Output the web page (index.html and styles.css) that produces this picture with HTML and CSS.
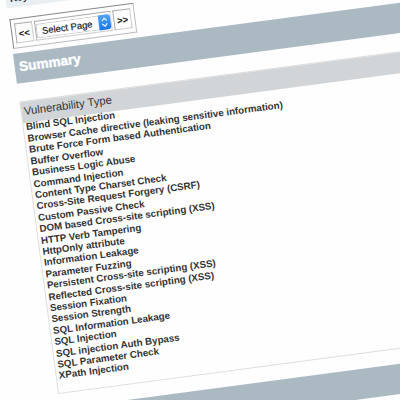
FILE: index.html
```
<!DOCTYPE html>
<html lang="en"><head><meta charset="utf-8"><title>Summary</title><link rel="stylesheet" href="styles.css"></head>
<body><main class="page">
<div class="top">Key</div>
<div class="pager"><div class="cell nav">&lt;&lt;</div><div class="cell mid"><div class="select"><span>Select Page</span><i><svg viewBox="0 0 12 15"><path d="M3.5 6 6 3.5 8.5 6M3.5 9 6 11.5 8.5 9"/></svg></i></div></div><div class="cell nav">&gt;&gt;</div></div>
<h1 class="bar">Summary</h1>
<section class="panel"><h2>Vulnerability Type</h2>
<ul><li>Blind SQL Injection</li><li>Browser Cache directive (leaking sensitive information)</li><li>Brute Force Form based Authentication</li><li>Buffer Overflow</li><li>Business Logic Abuse</li><li>Command Injection</li><li>Content Type Charset Check</li><li>Cross-Site Request Forgery (CSRF)</li><li>Custom Passive Check</li><li>DOM based Cross-site scripting (XSS)</li><li>HTTP Verb Tampering</li><li>HttpOnly attribute</li><li>Information Leakage</li><li>Parameter Fuzzing</li><li>Persistent Cross-site scripting (XSS)</li><li>Reflected Cross-site scripting (XSS)</li><li>Session Fixation</li><li>Session Strength</li><li>SQL Information Leakage</li><li>SQL Injection</li><li>SQL injection Auth Bypass</li><li>SQL Parameter Check</li><li>XPath Injection</li></ul></section>
<div class="bar"></div>
</main></body></html>
```
FILE: styles.css
```
* { box-sizing: border-box; }
html { overflow: hidden; }
body { margin: 0; width: 400px; height: 400px; overflow: hidden; background: #fefefe; font-family: "Liberation Sans", Arial, sans-serif; color: #333; }
.page { width: 500px; margin-left: 13.3px; margin-top: -6.5px; transform-origin: 0 60px; transform: rotate(-7.55deg); }
.top { height: 14px; width: 500px; margin-bottom: 11.4px; background: #e9eef2; font-size: 10px; font-weight: 700; line-height: 9px; padding-left: 4px; }
.pager { display: flex; gap: 2px; width: 125px; height: 30px; margin: 0 0 4.6px 1px; padding: 4px 3px; border: 1px solid; border-color: #888 #bbb #bbb #888; }
.cell { border: 1px solid; border-color: #aaa #ccc #ccc #aaa; display: flex; align-items: center; justify-content: center; font-size: 9.5px; color: #111; }
.nav { width: 18px; font-weight: 700; }
.mid { flex: 1; }
.select { width: 75px; height: 15px; border: 1px solid #ccc; border-right: 0; border-radius: 3px; display: flex; align-items: center; justify-content: space-between; padding-left: 5px; font-size: 9.4px; white-space: nowrap; -webkit-text-stroke: .15px; }
.select i { width: 12px; height: 15px; flex: none; border-radius: 0 3px 3px 0; background: linear-gradient(#55a5f8, #1676ee); }
.select svg { display: block; fill: none; stroke: #fff; stroke-width: 1.1; }
.bar { margin: 0; height: 29.6px; background: #abb9c3; color: #fff; font-size: 13.6px; line-height: 28.6px; padding-left: 4.5px; -webkit-text-stroke: .4px; }
.panel { margin: 18.5px 0 15.4px .3px; height: 294.5px; border: 1px solid #ddd; }
h2 { margin: 0; height: 21px; background: #d2d5d7; font-size: 11.3px; font-weight: 400; line-height: 19px; padding-left: 2px; }
ul { list-style: none; margin: -1.6px 0 0; padding: 0 0 0 2px; font-size: 9.75px; font-weight: 700; line-height: 11.4px; white-space: nowrap; }
```
